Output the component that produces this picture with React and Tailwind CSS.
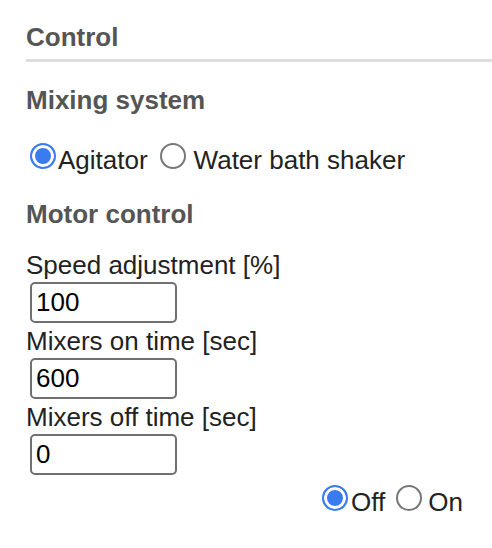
import React, { useState } from "react";

const radioCls =
  "appearance-none shrink-0 w-[26px] h-[26px] rounded-full border-2 border-[#777] bg-white checked:border-[#3a7bf0] checked:bg-[#3a7bf0] checked:shadow-[inset_0_0_0_3px_#fff]";

const inputCls =
  "block ml-[4px] mt-[2px] w-[147px] h-[41px] px-[4px] border-2 border-[#707070] rounded-[5px] bg-white text-black text-[26px] font-['Liberation_Sans',sans-serif] outline-none";

function Field({ label, value, onChange }) {
  return (
    <div className="mt-[3px] first:mt-0">
      <label className="block text-[#222]">{label}</label>
      <input className={inputCls} value={value} onChange={(e) => onChange(e.target.value)} />
    </div>
  );
}

export default function App() {
  const [mixer, setMixer] = useState("agitator");
  const [power, setPower] = useState("off");
  const [speed, setSpeed] = useState("100");
  const [onTime, setOnTime] = useState("600");
  const [offTime, setOffTime] = useState("0");

  return (
    <div className="w-[492px] h-[548px] bg-white pt-[22px] pl-[26px] font-['Liberation_Sans',sans-serif] text-[26px] leading-[30px]">
      <h2 className="font-bold text-[#555] pb-[7px] border-b-[3px] border-[#dedede]">Control</h2>

      <h3 className="mt-[23px] font-bold text-[#555]">Mixing system</h3>

      {/* mixer type */}
      <div className="mt-[28px] flex items-start text-[#222]">
        <input
          type="radio"
          name="mixer"
          className={`${radioCls} ml-[4px]`}
          checked={mixer === "agitator"}
          onChange={() => setMixer("agitator")}
        />
        <span className="mt-[2px] ml-[2px]">Agitator</span>
        <input
          type="radio"
          name="mixer"
          className={`${radioCls} ml-[12px]`}
          checked={mixer === "shaker"}
          onChange={() => setMixer("shaker")}
        />
        <span className="mt-[2px] ml-[8px]">Water bath shaker</span>
      </div>

      <h3 className="mt-[24px] font-bold text-[#555]">Motor control</h3>

      <div className="mt-[21px]">
        <Field label="Speed adjustment [%]" value={speed} onChange={setSpeed} />
        <Field label="Mixers on time [sec]" value={onTime} onChange={setOnTime} />
        <Field label="Mixers off time [sec]" value={offTime} onChange={setOffTime} />
      </div>

      {/* motor on/off */}
      <div className="mt-[10px] ml-[296px] flex items-start text-[#222]">
        <input
          type="radio"
          name="power"
          className={radioCls}
          checked={power === "off"}
          onChange={() => setPower("off")}
        />
        <span className="mt-[2px] ml-[3px]">Off</span>
        <input
          type="radio"
          name="power"
          className={`${radioCls} ml-[11px]`}
          checked={power === "on"}
          onChange={() => setPower("on")}
        />
        <span className="mt-[2px] ml-[6px]">On</span>
      </div>
    </div>
  );
}
